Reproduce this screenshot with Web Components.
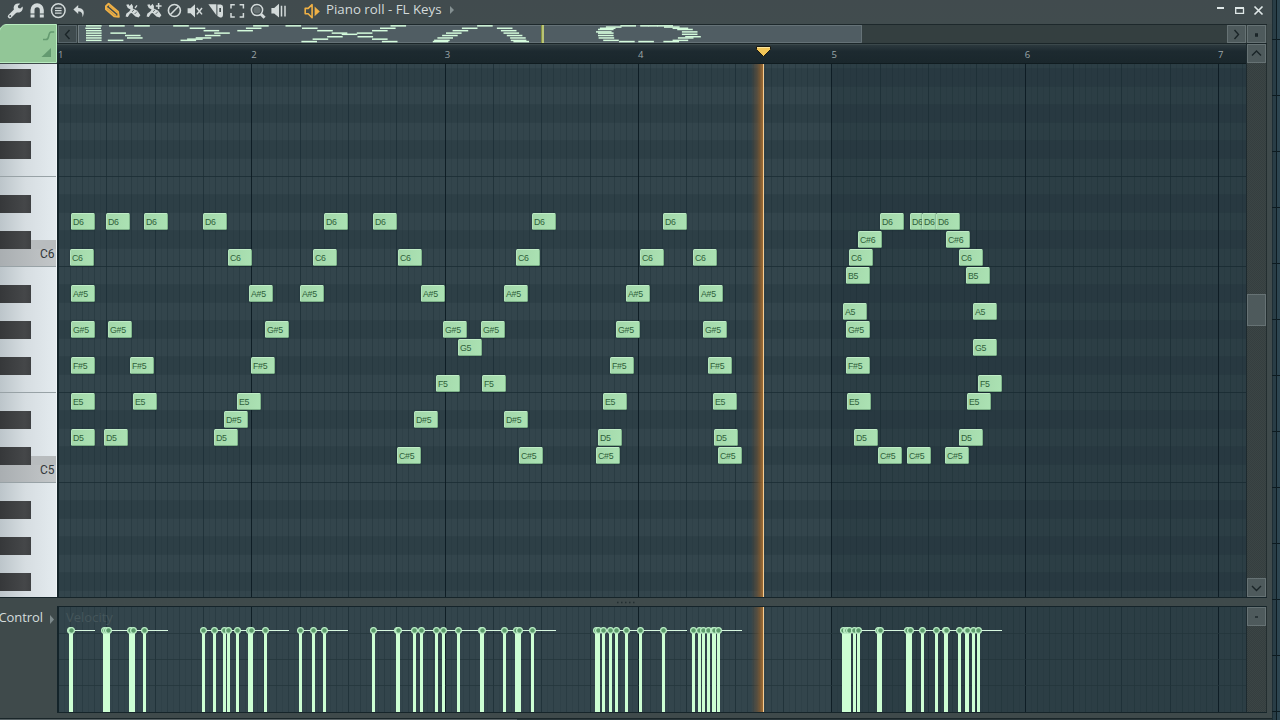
<!DOCTYPE html>
<html lang="en">
<head>
<meta charset="utf-8">
<title>Piano roll - FL Keys</title>
<style>
html,body{margin:0;height:100%;overflow:hidden;background:#2c434d}
</style>
</head>
<body>
<piano-roll-window></piano-roll-window>
<script>
const LEFT = 58, RIGHT = 1246, BAR = 193.35, NOTE_W = 24;
const NAMES = ['B6','A#6','A6','G#6','G6','F#6','F6','E6','D#6','D6','C#6','C6','B5','A#5','A5','G#5','G5','F#5','F5','E5','D#5','D5','C#5','C5','B4','A#4','A4','G#4','G4','F#4','F4'];
const SCORE = {
  'D6':[71,106,144,203,324,373,532,663,880,[910,13],[922,15],936],
  'C#6':[858,946],
  'C6':[70,228,313,398,516,640,693,849,959],
  'B5':[846,966],
  'A#5':[71,249,300,421,504,626,699],
  'A5':[843,973],
  'G#5':[71,108,265,443,481,616,703,846],
  'G5':[458,973],
  'F#5':[71,130,251,610,708,846],
  'F5':[436,482,978],
  'E5':[71,133,237,603,713,847,967],
  'D#5':[224,414,504],
  'D5':[71,104,214,598,714,854,959],
  'C#5':[397,519,596,718,878,907,945]
};
const NOTES = [];
for (const [name, list] of Object.entries(SCORE))
  for (const n of list) {
    const [x, w] = Array.isArray(n) ? n : [n, NOTE_W];
    NOTES.push({name, x, w, row: NAMES.indexOf(name)});
  }

function define(tag, css, render) {
  customElements.define(tag, class extends HTMLElement {
    connectedCallback() {
      if (this.shadowRoot) return;
      const root = this.attachShadow({mode: 'open'});
      root.innerHTML = `<style>*{box-sizing:border-box}${css}</style>${render(this)}`;
    }
  });
}

function verticalLines(y0, y1) {
  let s = '';
  for (let i = 1; i < 200; i++) {
    const x = Math.round(LEFT + BAR * i / 32);
    if (x >= RIGHT) break;
    const o = i % 32 === 0 ? 'stroke="#0b1a21" stroke-opacity=".9"' : i % 8 === 0 ? 'stroke="#1a2c33" stroke-opacity=".7"'
      : i % 2 === 0 ? 'stroke="#1a2c33" stroke-opacity=".32"' : 'stroke="#1a2c33" stroke-opacity=".12"';
    s += `<path d="M${x + .5} ${y0}V${y1}" ${o}/>`;
  }
  return s;
}
const GLOW = `<defs><linearGradient id="glow"><stop offset="0" stop-color="#8a5a2c" stop-opacity="0"/><stop offset=".5" stop-color="#8a5a2c" stop-opacity=".4"/><stop offset="1" stop-color="#a86f30" stop-opacity=".95"/></linearGradient></defs>`;

const BRUSH = `<path d="M1.200 3.800 3.600 3.200 4.600 5 6.600 2.800 8 5.200 7.800 7.600 12.400 9.800 15.400 14.200 13.600 16.600 10.400 15.600 6.800 12 5 12.600 2.800 16 .6 15.600 1.400 12.600 4.200 10.600 5.600 8.400 2.800 7Z" fill="currentColor"/><path d="M7 10.800 9 8.900M9.600 13 12 10.600" stroke="#414c4e" stroke-width=".8"/>`;
const ICONS = {
  wrench: `<path d="M2.800 15.400 8.600 9.600" stroke="currentColor" stroke-width="4" stroke-linecap="round"/><path d="M6.600 6.700C6.800 3.400 9.800 1.900 13.200 2.800L10.800 5.100 11.300 7 13.300 7.500 15.600 5.400C16.500 8.800 14 11.900 10.600 11.400L7.400 11.600Z" fill="currentColor"/><circle cx="3.200" cy="15" r=".9" fill="#414c4e"/>`,
  magnet: `<path d="M3.500 16.500V9a4.650 4.650 0 0 1 9.300 0v7.500" stroke="currentColor" stroke-width="4" fill="none"/><path d="M1 13h5M10.500 13h5" stroke="#414c4e" stroke-width="1.100"/>`,
  menu: `<circle cx="8.300" cy="9.600" r="6.800" fill="none" stroke="currentColor" stroke-width="1.500"/><path d="M5 7.100h6.600M5 9.600h6.600M5 12.100h6.600" stroke="currentColor" stroke-width="1.400"/>`,
  undo: `<path d="M1.400 8.400 6.200 4v3c5.200-.2 7.200 4.400 4.200 9.200.4-4-.8-5.800-4.200-5.800v2.600Z" fill="currentColor"/>`,
  pencil: `<path d="M2 5.200 4.600 2.800 14 10.800 14.800 15.800 10.200 15.200 2 8.200Z" fill="none" stroke="currentColor" stroke-width="2" stroke-linejoin="round"/><path d="M3 6.800 11.800 14.400M5.200 5 13.400 12" stroke="currentColor" stroke-width="1.400"/>`,
  brush: BRUSH + `<path d="M12 4.400 10 7" stroke="currentColor" stroke-width="1.300"/>`,
  brushplus: BRUSH + `<path d="M12.600 2v6M9.800 5h5.800" stroke="currentColor" stroke-width="1.500"/>`,
  mute: `<circle cx="8.400" cy="9.500" r="6" fill="none" stroke="currentColor" stroke-width="1.600"/><path d="M4.200 13.700 12.600 5.300" stroke="currentColor" stroke-width="1.600"/>`,
  speakerx: `<path d="M.6 7.300h3L8 3.200v13.200L3.600 12.300H.6Z" fill="currentColor"/><path d="m9.800 7 5.200 6.400M15 7l-5.200 6.400" stroke="currentColor" stroke-width="1.500"/>`,
  slice: `<path d="M.4 3.200h8v11Z" fill="currentColor"/><path d="M9.400 3.400h3.200q2.400.2 2.400 2.400v7.600q0 3.200-3 3.200L9.400 15Z" fill="currentColor"/><path d="M11.300 7h1.700v4h-1.700Z" fill="#414c4e"/>`,
  select: `<path d="M2 7.400V3.700h3.800M10.600 3.700h3.800v3.700M14.400 12v4h-3.800M5.800 16H2v-4" fill="none" stroke="currentColor" stroke-width="1.500"/>`,
  zoom: `<circle cx="7" cy="9" r="5.600" fill="none" stroke="currentColor" stroke-width="1.500"/><circle cx="7" cy="9" r="3.600" fill="currentColor" opacity=".25"/><path d="m10.800 13 3.800 3.800" stroke="currentColor" stroke-width="3"/>`,
  playback: `<path d="M.4 7h2.800L8 2.800v13.800L3.200 12.600H.4Z" fill="currentColor"/><path d="M10.500 4.800v10.600M14 4.800v10.600" stroke="currentColor" stroke-width="1.500"/>`,
  preview: `<path d="M1.200 7.400h3l3.900-3.700v13L4.200 12.800H1.200Z" fill="none" stroke="currentColor" stroke-width="1.600" stroke-linejoin="round"/><path d="M10.600 5.600v9.600L15.800 10.400Z" fill="currentColor"/>`
};
define('tool-icon', `:host{display:block;width:17px;height:18px;color:#d3dada}:host([hot]){color:#efb045}svg{display:block;overflow:visible}`,
  el => `<svg width="17" height="18" viewBox="0 0 17 18" fill="none">${ICONS[el.getAttribute('name')]}</svg>`);

define('title-bar', `
  :host{display:flex;box-sizing:border-box;height:24px;padding:1px 0 0 7px;align-items:flex-start;background:linear-gradient(#414b4e,#414c4e);color:#d3dada;font:13px/17px "Open Sans","Noto Sans",sans-serif}
  .tools{display:grid;grid-template-columns:22px 20.500px 22px 32px 21px 21px 20px 21px 21px 21px 21px 21px 33px 18px}
  .title{padding-left:4.500px;white-space:nowrap;font-size:13.300px}
  .arrow{margin:5px 0 0 7px}.space{flex:1}`,
  () => `<div class="tools">${['wrench','magnet','menu','undo','pencil','brush','brushplus','mute','speakerx','slice','select','zoom','playback','preview'].map(n => `<tool-icon name="${n}"${n === 'pencil' || n === 'preview' ? ' hot' : ''}></tool-icon>`).join('')}</div>
  <span class="title">Piano roll - FL Keys</span>
  <svg class="arrow" width="6" height="8"><path d="M1 0 5 4 1 8Z" fill="#849091"/></svg>
  <span class="space"></span>
  <svg width="58" height="18" fill="none" stroke="#e0e8e8"><path d="M3 7h7" stroke-width="2"/><path d="M21.700 7v5.400h7.800V7" stroke-width="1.300"/><path d="M21 7h9" stroke-width="2"/><path d="m40.500 5.500 8 8M48.500 5.500l-8 8" stroke-width="1.700"/></svg>`);

define('scroll-button', `:host{display:block;box-sizing:border-box;width:19px;height:19px;background:#4e5a5c;border:1px solid #667274;flex:none}svg{display:block}`,
  el => `<svg width="17" height="17" fill="none" stroke="#1a2427" stroke-width="1.400"><path d="${{left:'M10.500 4 6.500 8.500l4 4.500',right:'M6.500 4 10.500 8.500l-4 4.500',up:'M4 10.500 8.500 6 13 10.500',down:'M4 7 8.500 11.500 13 7',dot:'M7.700 8h1.600v2H7.700z',dash:'M7 9h3'}[el.getAttribute('dir')]}"/></svg>`);

define('corner-panel', `:host{display:block;width:57px;height:39px;background:#414c4e}svg{display:block}`,
  () => `<svg width="57" height="39"><path d="M-1 8Q1 1 6 .5H56.500V38.500H-1Z" fill="#92c697" stroke="#b9ecc0"/><path d="M43 15.500h3q2 0 2.600-3 .7-4.500 2.600-4.500h3" fill="none" stroke="#649a70" stroke-width="1.600"/><path d="M41.500 33h9.500v-9Z" fill="#649a70"/></svg>`);

define('song-overview', `:host{display:flex;box-sizing:border-box;height:20px;padding:0 1px;background:#343f40;border-top:1px solid #1d282b;border-bottom:1px solid #1b2629}
  scroll-button[dir=left]{background:#3f4b4e;border-color:#58656a}svg{display:block;flex:1;min-width:0}scroll-button{height:18px}
  .end{display:flex;gap:1px}`,
  () => {
    let s = '';
    const X = x => 86 + (x - 71) * .6606;
    for (const n of NOTES) s += `<rect x="${X(n.x).toFixed(1)}" y="${(24.100 + (n.row - 9) * 1.21).toFixed(2)}" width="${(n.w * .65).toFixed(1)}" height="1.500"/>`;
    return `<scroll-button dir="left"></scroll-button>
    <svg viewBox="77 24 1150 18" width="1150" height="18" preserveAspectRatio="xMinYMin slice"><path d="M78 24h784v18H78Z" fill="#505d63"/><path d="M78 24.500H862M78 41.500H861.500V24" fill="none" stroke="#657277"/><path d="M78.500 24v18" stroke="#748083"/><g fill="#d4fbdc">${s}</g><path d="M541.500 24v18" stroke="#86913f"/><path d="M543 24v18" stroke="#f2fb80" stroke-width="1.300"/></svg>
    <div class="end"><scroll-button dir="right"></scroll-button><scroll-button dir="dot"></scroll-button></div>`;
  });

define('time-ruler', `:host{display:block;box-sizing:border-box;height:20px;background:linear-gradient(#2c393e,#1d2a30 35%,#1a272c);border-top:1px solid #3b484b;border-bottom:1px solid #101c20;font:9.500px/20px "Open Sans","Noto Sans",sans-serif;color:#9ca7a9;position:relative}
  .bars{display:grid;grid-template-columns:repeat(7,193.350px);width:1188px;height:18px;overflow:hidden;padding-left:1px}
  svg{position:absolute;left:698px;top:0}`,
  () => `<div class="bars">${[1,2,3,4,5,6,7].map(n => `<span>${n}</span>`).join('')}</div>
  <svg width="18" height="13"><path d="M1.500 1.500h14v3L8.500 11.500 1.500 4.500Z" fill="#f2c658" stroke="#1b1a12"/><path d="M2 2.500h13" stroke="#fbe6a0"/></svg>`);

define('piano-keys', `
  :host{display:block;box-sizing:border-box;width:57px;height:533px;overflow:hidden;background:linear-gradient(90deg,#bcc5ca,#d6dde1 45%,#e4ebef);border-right:1px solid #eef3f5;font:12px/18px Roboto,"Liberation Sans",sans-serif;color:#34393b}
  .list{margin-top:-13px}
  .key{height:18px;display:flex;justify-content:flex-end;padding-right:1.500px}
  .black{justify-content:flex-start;padding:0}
  .black i{width:31px;height:18px;background:linear-gradient(90deg,#36383a,#454749 80%,#3e4042)}
  .cs{background:linear-gradient(transparent 9px,#b8bcbe 9px)}
  .c{background:linear-gradient(90deg,#a9aeb1,#bcc0c2 70%,#c3c7c9);line-height:10px}
  .c,.f{border-bottom:1px solid #98a2a6}`,
  () => `<div class="list">${NAMES.map(n => n.includes('#')
    ? `<div class="key black${/^C#[56]/.test(n) ? ' cs' : ''}"><i></i></div>`
    : `<div class="key${n[0] === 'C' ? ' c' : ''}${n === 'F6' || n === 'F5' ? ' f' : ''}">${n[0] === 'C' ? n : ''}</div>`).join('')}</div>`);

define('midi-note', `
  :host{box-sizing:border-box;position:absolute;height:17px;padding:0 0 0 1px;border:1px solid;border-color:#c0ecc6 #7fb48a #7cb088 #b4e4bc;border-radius:1.500px;background:linear-gradient(100deg,#a3d7aa,#abe2b3);box-shadow:0 0 2px #13242a99;font:8.800px/16px "Liberation Sans",sans-serif;letter-spacing:-.3px;color:#2f613a;white-space:nowrap}`,
  () => `<slot></slot>`);

define('note-grid', `
  :host{display:block;position:relative;height:533px;overflow:hidden;background:#33454c}
  .rows{margin-top:-13px}
  .row{height:18px;background:#33454c;border-bottom:1px solid #2e4047}
  .row.s{background:#2d3f46}
  .row.oct{border-bottom-color:#1f3138}
  svg{position:absolute;inset:0}`,
  () => `<div class="rows">${NAMES.map(n => `<div class="row${n.includes('#') ? ' s' : ''}${/^[CF]\d/.test(n) ? ' oct' : ''}"></div>`).join('')}</div>
  <svg viewBox="57 64 1189 533" width="1189" height="533">${GLOW}
    <path d="M832 64h414v533H832Z" fill="#12242c" fill-opacity=".2"/>
    ${verticalLines(64, 597)}
    <path d="M58 64v533" stroke="#14242a" stroke-width="2"/>
    <path d="M751 64h12v533h-12Z" fill="url(#glow)"/><path d="M763.500 64v533" stroke="#f6cd93"/>
  </svg>
  ${NOTES.map(n => `<midi-note style="left:${n.x - 57}px;top:${n.row * 18 - 13}px;width:${n.w}px">${n.name}</midi-note>`).join('')}`);

define('velocity-lane', `
  :host{display:block;position:relative;height:106px;overflow:hidden;background:#33454c}
  svg{display:block}`,
  () => {
    const xs = [...new Set(NOTES.map(n => n.x))].sort((a, b) => a - b);
    return `<svg viewBox="57 606 1189 106" width="1189" height="106">${GLOW}
    <path d="M832 606h414v106H832Z" fill="#12242c" fill-opacity=".2"/>
    ${verticalLines(607, 712)}
    <path d="M58 633.500H1246M58 659.500H1246M58 685.500H1246" stroke="#22343b" stroke-opacity=".7"/>
    <path d="M57 606.500H1246" stroke="#15242a"/><path d="M58 606v106" stroke="#14242a" stroke-width="2"/>
    <text x="66" y="622" font-family="Open Sans,Noto Sans,sans-serif" font-size="13" fill="#45565b">Velocity</text>
    <path d="M751 607h12v105h-12Z" fill="url(#glow)"/><path d="M763.500 607v105" stroke="#f6cd93"/>
    <path d="${NOTES.map(n => `M${n.x} 630.500h${n.w}`).join('')}" stroke="#d8f8e0"/>
    <path d="${xs.map(x => `M${x - 1} 632h3v80h-3Z`).join('')}" fill="#cdffd3"/>
    ${xs.map(x => `<circle cx="${x + .5}" cy="630.500" r="2.900" fill="#5b9a6b" stroke="#bcefc6" stroke-width="1.200"/>`).join('')}
    </svg>`;
  });

define('control-label', `:host{display:flex;box-sizing:border-box;width:57px;height:106px;padding-top:2px;font:13px/18px "Open Sans","Noto Sans",sans-serif;color:#d5dddd;letter-spacing:-.1px}svg{margin:7px 0 0 auto;flex:none}span{margin-left:-1.500px}`,
  () => `<span>Control</span><svg width="7" height="9"><path d="M0 0 4 4.500 0 9Z" fill="#7d8a8c"/></svg>`);

define('scroll-track', `:host{display:flex;box-sizing:border-box;flex-direction:column;justify-content:space-between;width:21px;border-right:1px solid #232e30;background:repeating-conic-gradient(#353e3f 0 25%,#3b4545 0 50%) 0 0/2px 2px;border-left:1px solid #1d2a2f}
  .thumb{width:19px;height:32px;background:#4e5a5c;border:1px solid #667274;margin-bottom:22px}`,
  el => el.hasAttribute('thumb')
    ? `<scroll-button dir="up"></scroll-button><div class="thumb"></div><scroll-button dir="down"></scroll-button>`
    : `<scroll-button dir="dash"></scroll-button>`);

define('piano-roll-window', `
  :host{display:grid;grid-template-columns:1272px 8px;width:1280px;height:720px;overflow:hidden}
  .win{background:#3f4a4b;height:720px;overflow:hidden}
  .stack{display:grid;grid-template-columns:57px 1189px 21px;grid-template-rows:20px 20px 534px 8px 107px}
  .a{grid-area:1/1/3/2;align-self:start}.b{grid-area:1/2/2/4}.c{grid-area:2/2/3/3}.d{grid-area:3/1}.e{grid-area:3/2}.f{grid-area:2/3/4/4;margin-bottom:1px}.g{grid-area:4/1/5/4;display:grid;place-items:center}
  .g svg{margin-right:16px}
  .h{grid-area:5/1}.i{grid-area:5/2}.j{grid-area:5/3;border-top:1px solid #16252a;margin-bottom:1px}
  .line{grid-area:3/1/4/4;align-self:end;height:1px;background:#16252a}.line2{grid-area:5/2/6/4;align-self:end;height:1px;background:#16252a}
  .edge{border-top:1px solid #1a2629;height:2px;margin-top:5px;background:linear-gradient(90deg,#566164 517px,#2b383c 517px)}
  .desk{background:repeating-linear-gradient(transparent 0 55px,#0d1b21 55px 56px) 0 -16px/100% 560px,linear-gradient(90deg,#1d2d34 1px,#293d46 1px 4px,#0d1b21 4px 5px,#2d4550 5px)}`,
  () => `<div class="win">
    <title-bar></title-bar>
    <div class="stack">
      <corner-panel class="a"></corner-panel>
      <song-overview class="b"></song-overview>
      <time-ruler class="c"></time-ruler>
      <scroll-track class="f" thumb></scroll-track>
      <piano-keys class="d"></piano-keys>
      <note-grid class="e"></note-grid>
      <div class="line"></div>
      <div class="g"><svg width="20" height="4"><path d="M1 2.500h18" stroke="#222e31" stroke-width="1.500" stroke-dasharray="1.500 2.500"/></svg></div>
      <control-label class="h"></control-label>
      <velocity-lane class="i"></velocity-lane>
      <scroll-track class="j"></scroll-track>
      <div class="line2"></div>
    </div>
    <div class="edge"></div>
  </div><div class="desk"></div>`);
</script>
</body>
</html>
